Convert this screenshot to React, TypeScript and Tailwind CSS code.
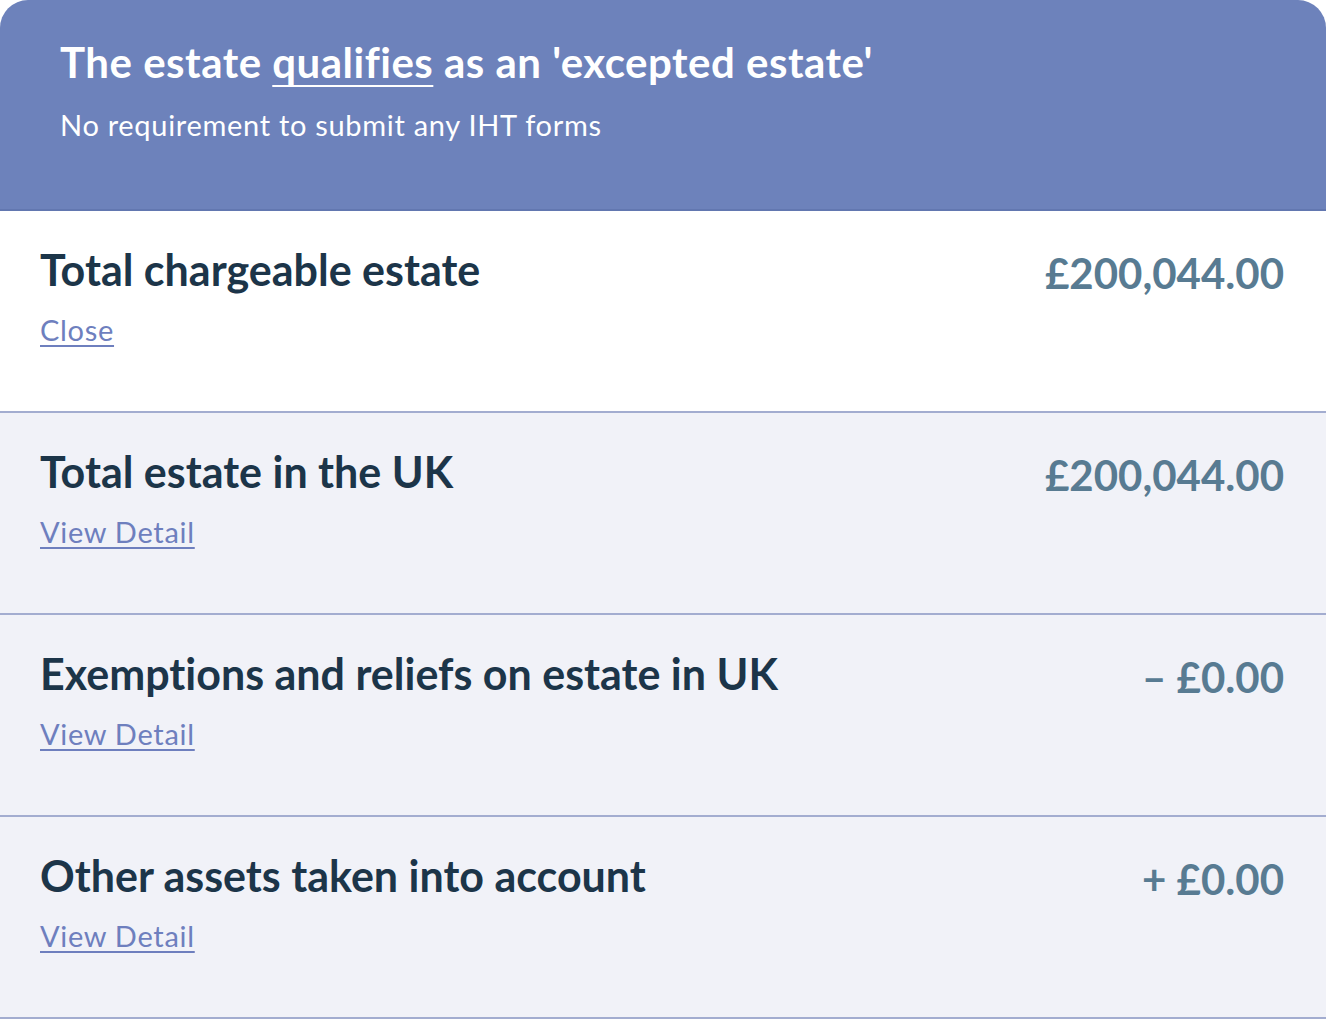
const rows = [
  { title: 'Total chargeable estate', link: 'Close', amount: '£200,044.00', bg: 'bg-white' },
  { title: 'Total estate in the UK', link: 'View Detail', amount: '£200,044.00', bg: 'bg-[#f1f2f8]' },
  { title: 'Exemptions and reliefs on estate in UK', link: 'View Detail', amount: '– £0.00', bg: 'bg-[#f1f2f8]' },
  { title: 'Other assets taken into account', link: 'View Detail', amount: '+ £0.00', bg: 'bg-[#f1f2f8]' },
];

export default function App() {
  return (
    <div className="w-[1326px] h-[1020px] overflow-hidden bg-white font-['Lato','Liberation_Sans',sans-serif] [font-variant-ligatures:none]">
      <div className="h-[211px] rounded-t-[28px] bg-[#6d82bb] border-b-2 border-[#6277b0] px-[60px] pt-[37px]">
        <h1 className="text-[42px] leading-[1.2] font-bold tracking-[0.5px] text-white">
          The estate <span className="underline decoration-2 underline-offset-[7px]">qualifies</span> as an 'excepted estate'
        </h1>
        <p className="mt-[21px] text-[29px] leading-[1.2] tracking-[0.7px] text-white">No requirement to submit any IHT forms</p>
      </div>
      {rows.map((row) => (
        <div
          key={row.title}
          className={`${row.bg} h-[202px] border-b-2 border-[#a3add0] flex justify-between pl-[40px] pr-[42px]`}
        >
          <div className="pt-[33px]">
            <div className="text-[43px] leading-[1.2] font-bold text-[#1c3549]">{row.title}</div>
            <a className="block mt-[17px] text-[29px] leading-[1.2] tracking-[0.7px] text-[#6e7fbe] underline decoration-2 underline-offset-[4px]">
              {row.link}
            </a>
          </div>
          <div className="pt-[37px] text-[42px] leading-[1.2] font-bold text-[#587b92]">{row.amount}</div>
        </div>
      ))}
    </div>
  );
}
